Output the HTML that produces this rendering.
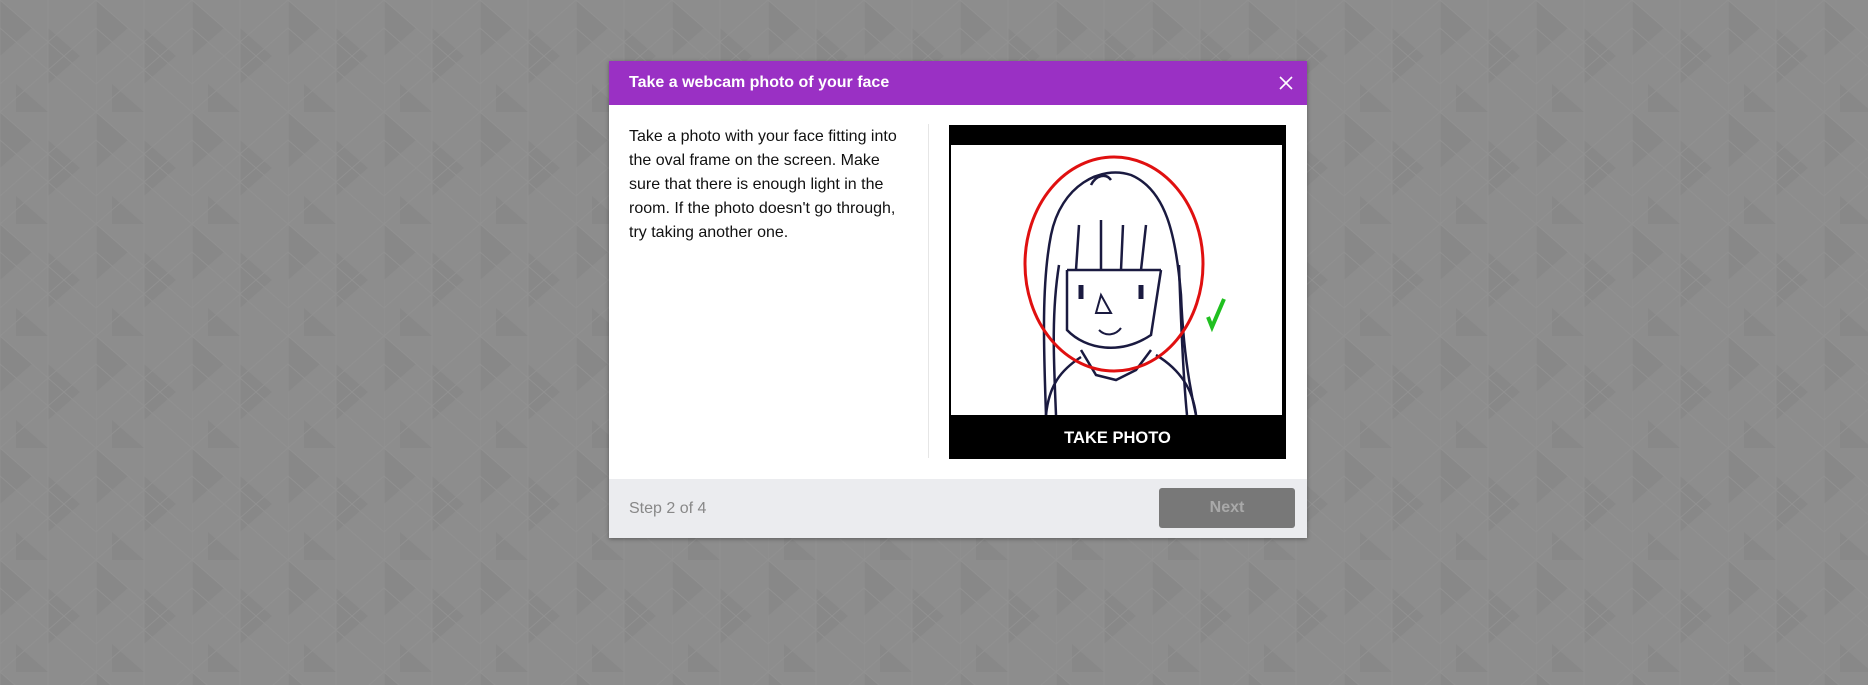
<!DOCTYPE html>
<html><head><meta charset="utf-8"><style>
*{margin:0;padding:0;box-sizing:border-box}
html,body{width:1868px;height:685px;overflow:hidden;font-family:"Liberation Sans",Arial,sans-serif}
body{background:#8d8d8d;position:relative}
.bg{position:absolute;inset:0}
.modal{position:absolute;left:609px;top:61px;width:698px;height:477px;background:#fff;box-shadow:0 1px 4px rgba(0,0,0,.35)}
.hd{height:44px;background:#9a30c4;color:#fff;font-weight:bold;font-size:16px;line-height:44px;padding-left:20px;position:relative}
.x{position:absolute;right:14px;top:15px;width:14px;height:14px}
.txt{position:absolute;left:20px;top:64px;width:280px;font-size:16px;line-height:24px;color:#111}
.div{position:absolute;left:319px;top:63px;width:1px;height:334px;background:#e6e6e6}
.cam{position:absolute;left:340px;top:64px;width:337px;height:334px;background:#000}
.img{position:absolute;left:2px;top:20px;width:331px;height:270px;background:#fff}
.tp{position:absolute;left:0;bottom:0;width:100%;height:42px;color:#fff;font-weight:bold;font-size:16.5px;text-align:center;line-height:42px}
.ft{position:absolute;left:0;bottom:0;width:100%;height:59px;background:#ebecef}
.step{position:absolute;left:20px;top:21px;font-size:16px;color:#888}
.nx{position:absolute;right:12px;top:9px;width:136px;height:40px;background:#787878;border-radius:3px;color:#a9a9a9;font-weight:bold;font-size:16px;text-align:center;line-height:40px}
</style></head><body>
<svg class="bg" width="1868" height="685"><defs><pattern id="p" width="96" height="112" patternUnits="userSpaceOnUse"><path d="M0 0L32 28L0 56Z M48 28L80 56L48 84Z M16 84L48 112L16 112Z" fill="#888"/><path d="M0 0V112M48 0V112M0 0L96 84M0 84L96 0M0 28L96 112M0 112L96 28" stroke="#919191" stroke-width="1"/></pattern></defs><rect width="1868" height="685" fill="url(#p)"/></svg>
<div class="modal">
<div class="hd">Take a webcam photo of your face
<svg class="x" viewBox="0 0 14 14"><path d="M1 1L13 13M13 1L1 13" stroke="#fff" stroke-width="1.6"/></svg></div>
<div class="txt">Take a photo with your face fitting into the oval frame on the screen. Make sure that there is enough light in the room. If the photo doesn't go through, try taking another one.</div>
<div class="div"></div>
<div class="cam">
<div class="img"><svg width="331" height="270" viewBox="0 0 331 270" fill="none" stroke="#1a1a40" stroke-width="2.5">
<path d="M95 270C93 210 90 140 100 90C110 40 150 20 180 30C215 45 225 90 230 150C232 200 238 240 245 270"/>
<path d="M105 270C103 220 100 170 108 120M228 120C230 180 232 230 236 270"/>
<path d="M116 125L116 185C135 205 170 210 200 190L210 125"/>
<path d="M116 125L210 125"/>
<path d="M125 125L128 80M150 125L150 75M170 125L172 80M190 125L195 80"/>
<path d="M140 40C145 30 155 28 160 35"/>
<path d="M130 205L145 230L165 235L185 225L200 205"/>
<path d="M95 270C98 240 110 225 130 212M245 270C242 245 230 225 205 210"/>
<path d="M130 140v14M190 140v14" stroke-width="5"/>
<path d="M150 150L145 168L160 168Z" stroke-width="2"/>
<path d="M148 185C155 192 165 190 170 183" stroke-width="2"/>
<ellipse cx="163" cy="119" rx="89" ry="107" stroke="#e01010" stroke-width="3"/>
<path d="M257 172L261 182L273 154" stroke="#20c020" stroke-width="4"/>
</svg></div>
<div class="tp">TAKE PHOTO</div>
</div>
<div class="ft"><div class="step">Step 2 of 4</div><div class="nx">Next</div></div>
</div>
</body></html>
